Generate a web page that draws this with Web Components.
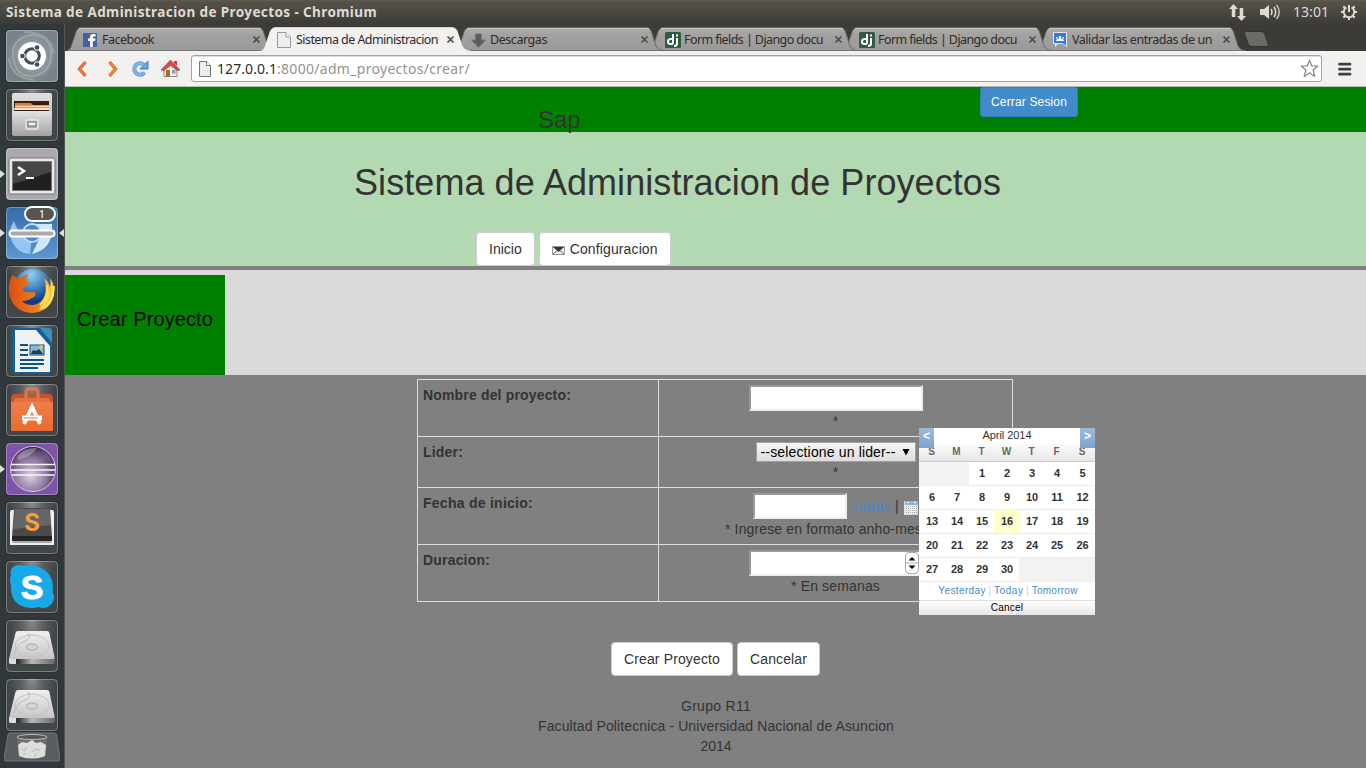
<!DOCTYPE html>
<html lang="es">
<head>
<meta charset="utf-8">
<title>Sistema de Administracion de Proyectos</title>
<style>
html,body{margin:0;padding:0;width:1366px;height:768px;overflow:hidden}
body{font-family:"Liberation Sans",Arial,sans-serif}
</style>
</head>
<body>
<ubuntu-desktop></ubuntu-desktop>
<script>
const define = (name, html, after) => customElements.define(name, class extends HTMLElement {
  connectedCallback() {
    if (this.shadowRoot) return;
    const root = this.attachShadow({mode: 'open'});
    root.innerHTML = typeof html === 'function' ? html(this) : html;
    if (after) after(this, root);
  }
});

/* Single line of text spread over a given width */
define('fit-text', '<style>:host{display:inline-block;white-space:pre}span{display:inline-block}</style><span><slot></slot></span>', (el, root) => {
  const s = root.querySelector('span'), w = s.getBoundingClientRect().width, n = el.textContent.length;
  if (w && el.getAttribute('w')) s.style.letterSpacing = ((+el.getAttribute('w') - w) / n) + 'px';
});

/* ---------- top panel ---------- */
define('top-panel', `
<style>
:host{display:flex;align-items:center;height:24px;box-sizing:border-box;background:linear-gradient(#5f5c4f 0,#54524a 2px,#3e3c37 23px);color:#dfdbd2;font-family:"Noto Sans","Open Sans",sans-serif;padding:0 8px 0 6px;line-height:24px}
.t{font-weight:700;font-size:13.500px;flex:1}
.r{display:flex;align-items:center;height:24px}
.clock{font-size:14px;margin:0 11px 0 12px}
svg{display:block}
</style>
<div class="t"><fit-text w="371">Sistema de Administracion de Proyectos - Chromium</fit-text></div>
<div class="r">
<svg width="19" height="18" viewBox="0 0 19 18" fill="#dfdbd2"><path d="M5.5 1 10 6H7.3v8H3.8V6H1zM13.5 18 9 13h2.7V5h3.5v8H18z"/></svg>
<svg style="margin-left:13px" width="21" height="18" viewBox="0 0 21 18" fill="none" stroke="#dfdbd2" stroke-width="1.5"><path d="M0 6h4l5-4v14l-5-4H0z" fill="#dfdbd2" stroke="none"/><path d="M11 6q2 3 0 6M14 4q3.5 5 0 10" /><path d="M16.5 2q5.5 7 0 14" opacity=".8"/></svg>
<fit-text class="clock" w="36">13:01</fit-text>
<svg width="18" height="18" viewBox="0 0 18 18" fill="none" stroke="#dfdbd2"><path d="M6.4 4.3A5.3 5.3 0 1 0 11.6 4.3M9 2v7" stroke-width="2"/><path d="M9 14v3M1 9h3M14 9h3M3.3 14.7l2-2M14.7 14.7l-2-2M3.3 3.3l2 2M14.7 3.3l-2 2" stroke-width="2"/></svg>
</div>`);

/* ---------- launcher ---------- */
const disk = `<defs><linearGradient id="d" y2="1" x2="0"><stop stop-color="#efefef"/><stop offset="1" stop-color="#c6c6c6"/></linearGradient><linearGradient id="e"><stop offset=".2" stop-color="#333"/><stop offset=".5" stop-color="#bbb"/><stop offset="1" stop-color="#666"/></linearGradient></defs><path d="M3 38h46v4q0 2-2 2H5q-2 0-2-2z" fill="url(#e)"/><path d="M3 38h7v6H5q-2 0-2-1z" fill="#ddd"/><path d="M12 11h29q2 0 2.400 2L48.500 37q.5 2-2 2H5q-2 0-1.500-2L9.500 13q.5-2 2.500-2z" fill="url(#d)"/><ellipse cx="26" cy="26" rx="17" ry="11" fill="none" stroke="#c2c2c2"/><ellipse cx="26" cy="27" rx="5.500" ry="3" fill="#d4d4d4" stroke="#aaa"/><path d="M22 13q4 5-3 8-8 2-11 13" fill="none" stroke="#bbb"/>`;
const icons = {
dash:`<defs><radialGradient id="a"><stop stop-color="#a9b1b5"/><stop offset="1" stop-color="#788389"/></radialGradient></defs><rect width="52" height="52" rx="4" fill="url(#a)"/><g fill="none" stroke="#b8c0c3" stroke-width="2" opacity=".45"><path d="M7 28Q5 8 26 5q20 0 19 22M45 20q2 22-17 26Q10 48 7 27M18 2q26 0 30 22M3 28q2 20 25 22"/></g><circle cx="26" cy="26" r="14" fill="#fff"/><circle cx="26" cy="26" r="7.300" fill="none" stroke="#414e54" stroke-width="3"/><g fill="#414e54" stroke="#fff"><circle cx="16.500" cy="26" r="2.800"/><circle cx="31" cy="17.500" r="2.800"/><circle cx="31" cy="34.500" r="2.800"/></g>`,
files:`<defs><linearGradient id="f" x2="0" y2="1"><stop stop-color="#e2e2e2"/><stop offset="1" stop-color="#a2a2a2"/></linearGradient></defs><path d="M6 6q0-2 2-2h36q2 0 2 2v40H6z" fill="url(#f)"/><path d="M8 12h35v10H8z" fill="#3a1e12"/><path d="M9 14h16l2 2h16v5H9z" fill="#e07b39"/><path d="M9 17.500h34" stroke="#ffd9a0" stroke-width="1.500"/><path d="M8 20h35" stroke="#fff" stroke-width="1.500"/><path d="M6 22h40l-1 25H7z" fill="url(#f)"/><rect x="20" y="31" width="12" height="9" rx="2" fill="#aaa" stroke="#ddd" stroke-width="2"/><rect x="22" y="33" width="8" height="4" fill="#eee" stroke="#777"/>`,
term:`<rect width="52" height="52" rx="4" fill="#aaa8aa"/><rect x="3" y="10" width="46" height="36" rx="2" fill="#e8e8e8" stroke="#777"/><rect x="6.500" y="13.500" width="39" height="29" fill="#202020" stroke="#777"/><path d="m7 14 38 0v10L7 36z" fill="#464646"/><path d="m12 19 6 4-6 4" stroke="#fff" stroke-width="2.500" fill="none"/><path d="M20 30h8" stroke="#fff" stroke-width="2"/>`,
chromium:`<defs><linearGradient id="g" x2="0" y2="1"><stop stop-color="#356ba8"/><stop offset="1" stop-color="#5c96d3"/></linearGradient></defs><rect width="52" height="52" rx="4" fill="url(#g)"/><path d="M8 14q4 15 18 15l-2 18A21 21 0 0 1 8 14z" fill="#98c4f2"/><path d="M26 17h20q2 25-20 30l9-19z" fill="#d1e8fb"/><circle cx="26" cy="26" r="9" fill="#4488d0" stroke="#c0dbf5" stroke-width="2"/><rect x="3.500" y="23.500" width="45" height="6" rx="3" fill="#aaa" stroke="#fff" stroke-width="2"/>`,
firefox:`<defs><radialGradient id="h" cx=".45" cy=".15" r=".7"><stop stop-color="#8ad3f5"/><stop offset="1" stop-color="#0c3c83"/></radialGradient><linearGradient id="i" x2="1" y2="0"><stop stop-color="#d94f12"/><stop offset=".65" stop-color="#f08021"/><stop offset="1" stop-color="#ffdc46"/></linearGradient></defs><circle cx="27" cy="22" r="19" fill="url(#h)"/><path d="M6 9q-5 12-2 22 5 15 22 16 18-1 22-18 1-10-4-17 1 6 0 9-2-6-6-9 3 10 1 16-3 10-12 11-8 0-11-4 7 0 13-5 2-4-3-4-6 1-9-2 0-3 6-6l-2-3q-2-3 2-7-6 1-9 5-5-2-8-4z" fill="url(#i)"/><path d="M48 20q-1 19-14 23 9-8 9-18M41 19q2 13-7 20" fill="none" stroke="#ffe05a" stroke-width="2"/>`,
writer:`<path d="M10 3h31q5 0 5 5v36q0 5-5 5H10q-4 0-4-5V8q0-5 4-5z" fill="#116097"/><path d="M34 3h10l2 2v13z" fill="#3b8fbd"/><path d="M9 5h21l14 16v26H9z" fill="#f1f1f1"/><path d="M14 21h8m-8 5h8m-8 5h8m-8 5h24m-24 4h24m-24 4h18" transform="translate(0 -1)" stroke="#0b548a" stroke-width="2"/><rect x="24" y="20" width="14" height="10" fill="#83bad7" stroke="#0b548a"/><path d="m25 29 2-4 3 1 3-2 4 5z" fill="#253d45"/><circle cx="35" cy="22" r="2" fill="#e4c744"/>`,
soft:`<defs><linearGradient id="j" x2="0" y2="1"><stop stop-color="#ee8050"/><stop offset="1" stop-color="#ec6a2d"/></linearGradient></defs><path d="M5 13h42v34H5z" fill="url(#j)"/><path d="M5 13v5h42v-5l-2-3H7z" fill="#bf5530"/><path d="M8 14h36v4H8z" fill="#e66d40"/><path d="M20 18V8q0-3 3-3h6q3 0 3 3v10" fill="none" stroke="#e1754b" stroke-width="3"/><path d="m18 40 8-17 8 17" fill="none" stroke="#fff" stroke-width="4"/><path d="M16 34h20" stroke="#fff" stroke-width="5"/><path d="M18 34h14" stroke="#e97a4b"/>`,
eclipse:`<defs><radialGradient id="k" cx=".45" cy=".65"><stop stop-color="#ddd2e4"/><stop offset=".7" stop-color="#8d7ba3"/><stop offset="1" stop-color="#5a446c"/></radialGradient><linearGradient id="kk" x2="0" y2="1"><stop stop-color="#2b1941"/><stop offset="1" stop-color="#cabdd5" stop-opacity="0"/></linearGradient></defs><rect width="52" height="52" rx="4" fill="#8053aa"/><circle cx="27" cy="26" r="22.500" fill="url(#k)" stroke="#d8cce2"/><path d="M8 20Q14 4 27 4t19 16z" fill="url(#kk)"/><path d="M5 21.500h44M5 27h44M6 32h42" stroke="#f8f6fa" stroke-width="1.700"/><path d="M11 14q7-10 20-9-3 7-18 12z" fill="#eee" opacity=".3"/>`,
sublime:`<path d="m4 10 1-2h42l1 2v33H4z" fill="#eee"/><path d="m6 41 3-4h34l3 4z" fill="#aaa"/><path d="m8 8q0-2 2-2h32q2 0 2 2l2 27H6z" fill="#4a4a4a"/><path d="M6 34h40v5H6z" fill="#252525"/><path d="M9 7h34l2 16-38 4z" fill="#666"/><text x="26" y="29" text-anchor="middle" font-family="Inter,sans-serif" font-size="24" font-weight="700" fill="#ff9c3a">S</text>`,
skype:`<path d="M5 14C3 7 10 2 18 5q9-2 17 2 11 5 12 18 0 3-.5 6 4 7-2 13-5 5-12 2-10 3-19-2Q4 38 5 25 3 19 5 14z" fill="#18a9e8"/><text x="26" y="38" text-anchor="middle" font-family="Liberation Sans,sans-serif" font-size="34" font-weight="700" fill="#fff" stroke="#fff">S</text>`,
disk, disk2:disk
};
const tile = (k) => `<launcher-tile icon="${k}"${/term|chromium|eclipse/.test(k)?' running':''}${k==='chromium'?' count="1"':''}></launcher-tile>`;
define('launcher-tile', el => `
<style>
:host{display:block;position:relative;width:52px;height:52px;box-sizing:border-box}
.box{width:52px;height:52px;border-radius:4px;background:radial-gradient(ellipse at 50% 0,#8a8d8e 0,#5b5f61 30%,#424749 60%,#404547);box-shadow:0 0 0 1px #1f252855}
svg{display:block}
.l,.r{position:absolute;top:22px;width:5px;height:8px;background:#ddd}
.l{left:-6px;clip-path:polygon(0 0,100% 50%,0 100%)}
.r{left:53px;clip-path:polygon(100% 0,0 50%,100% 100%)}
.n{position:absolute;left:18px;top:-1px;width:28px;height:12px;border:2px solid #fff;border-radius:8px;background:#555;color:#fff;font:11px/12px "Noto Sans",sans-serif;text-align:center;text-indent:4px}
</style><div class="box"><svg width="52" height="52" viewBox="0 0 52 52">${icons[el.getAttribute('icon')]}<rect x=".5" y=".5" width="51" height="51" rx="4" fill="none" stroke="#fff" opacity=".3"/></svg></div>
${el.hasAttribute('running')?'<i class="l"></i>':''}${el.hasAttribute('count')?`<i class="r"></i><span class="n">${el.getAttribute('count')}</span>`:''}`);
define('unity-launcher', `
<style>
:host{display:flex;flex-direction:column;gap:7px;width:65px;box-sizing:border-box;padding:6px 0 0 6px;background:linear-gradient(90deg,#30383b,#30383b 64px,#555 64px);height:744px;overflow:hidden}
launcher-tile{flex:none}
.trash{margin-top:-6px;margin-left:-2px;display:block;flex:none}
</style>${Object.keys(icons).map(tile).join('')}
<svg class="trash" width="56" height="31" viewBox="0 0 56 31"><path d="M6 1h44q2 0 2.500 2L56 27q0 2-2 2H2q-2 0-2-2L4 3q0-2 2-2z" fill="#585d60" stroke="#73787a"/><path d="M13 5q15-4 30 0l-2 20q-13 4-26 0z" fill="#6d6f70"/><ellipse cx="28" cy="5" rx="15" ry="2.500" fill="#555" stroke="#bbb"/><path d="m14 13 4-3 5 1 5-3 4 3 5-1 5 3-1 11q-13 5-26 0z" fill="#dcdedc"/><path d="m17 16 3 3 3-4m5 5 4-3 4 1M19 23l3-2m8 3 3-2" fill="none" stroke="#b5b8b6"/></svg>`);

/* ---------- browser chrome ---------- */
const fav = {
fb:`<rect y="1" width="14" height="14" fill="#4561a8"/><path d="M7 15V9H5V6.500h2V5q0-3 3-3h2.500v2.500H11q-1.200 0-1.200 1.200v.8h2.700L12 9H9.800v6z" fill="#fff"/>`,
page:`<path d="M.5.500h8.500l4.500 4.500v10.500H.5z" fill="#eee" stroke="#999"/><path d="M9 .5V5h4.500" fill="#fff" stroke="#999"/>`,
down:`<path d="M4.500 2h6v6h4l-7 7.500-7-7.500h4z" fill="#5b5b5b" stroke="#777"/>`,
dj:`<rect width="16" height="16" rx="1.500" fill="#2e5b41"/><path d="M8 2v10M8 7H5.500Q3 7 3 9.500T5.500 12H8M12 6v5.500Q12 14 9 14M12 2.500v2" fill="none" stroke="#fff" stroke-width="2"/>`,
grp:`<path d="M.5.500h13v14l-4-3h-9z" fill="#3579e8" stroke="#e8e8e0"/><path d="M2 12v3l3-3z" fill="#e8e8e0"/><path d="M3 9h8q0-2-2-2.300L7 6 5 6.700Q3 7 3 9z" fill="#fff"/><path d="M6 4h2v2H6zM3 5h1.500v1.500H3zM9.500 5H11v1.500H9.500z" fill="#fff"/>`
};
define('browser-tab', el => {
  const on = el.hasAttribute('active');
  return `
<style>
:host{display:block;position:relative;width:209px;height:24px;flex:none;margin-right:-15px}
.bg{position:absolute;inset:0;display:block}
.c{position:relative;display:flex;align-items:center;height:24px;padding-left:16px}
.c svg{flex:none;width:16px}
.tx{width:143px;margin-left:3px;white-space:nowrap;font:12.500px/26px "Noto Sans",sans-serif;height:24px;color:#2f2b28}
.x{margin-left:7px}
</style>
<svg class="bg" width="209" height="24" viewBox="0 0 209 24"><defs><linearGradient id="t" x2="0" y2="1"><stop stop-color="#b0aeac"/><stop offset=".3" stop-color="#a4a2a0"/><stop offset="1" stop-color="#9b9997"/></linearGradient></defs>
<path d="M0 24Q3 23 4 20L9 5Q10.500 .5 15 .5H191Q195 .5 196.500 5L201 19Q203 23.500 209 24z" fill="${on?'#f2f1f0':'url(#t)'}"/><path d="M0 24Q3 23 4 20L9 5Q10.500 .5 15 .5H191Q195 .5 196.500 5L201 19Q203 23.500 209 24" fill="none" stroke="${on?'#fff':'#6b6965'}" stroke-width="${on?.6:1}"/>${on?'':'<path d="M12 1.500H194" stroke="#c4c2c0"/><path d="M3 23.500h203" stroke="#777"/>'}</svg>
<div class="c"><svg width="16" height="16" style="margin-top:2px">${fav[el.getAttribute('icon')]}</svg><div class="tx"><fit-text w="${el.getAttribute('w')}">${el.getAttribute('label')}</fit-text></div>
<svg class="x" width="9" height="9" viewBox="0 0 9 9" style="width:9px;margin-top:1px"><path d="m1.500 1.500 6 6m0-6-6 6" stroke="#4b4845" stroke-width="1.600"/></svg></div>`;
});
define('tab-strip', `
<style>
:host{display:flex;height:27px;box-sizing:border-box;padding:3px 0 0 2px;background:#3c3b37;align-items:flex-start}
.new{margin-left:12px;margin-top:4px;display:block}
</style>
<browser-tab style="z-index:6" icon="fb" label="Facebook" w="52"></browser-tab>
<browser-tab style="z-index:9" active icon="page" label="Sistema de Administracion" w="142"></browser-tab>
<browser-tab style="z-index:5" icon="down" label="Descargas" w="57"></browser-tab>
<browser-tab style="z-index:4" icon="dj" label="Form fields | Django docu" w="139"></browser-tab>
<browser-tab style="z-index:3" icon="dj" label="Form fields | Django docu" w="139"></browser-tab>
<browser-tab style="z-index:2" icon="grp" label="Validar las entradas de un" w="140"></browser-tab>
<svg class="new" width="26" height="17" viewBox="0 0 26 17"><path d="M3 .5h15q3 0 4 3l3 9q1 3-2 3H9q-3 0-4-3L1.500 3Q.500.500 3 .5z" fill="#6c6a65" stroke="#33322e"/></svg>`);
define('browser-toolbar', `
<style>
:host{display:flex;align-items:center;height:36px;box-sizing:border-box;background:#f2f1f0;border-bottom:1px solid #bbb9b6;padding:0 14px 0 12px}
svg{display:block;flex:none}
.url{display:flex;align-items:center;width:1131px;height:27px;box-sizing:border-box;border:1px solid #a5a29d;border-radius:3px;background:#fff;margin:0 16px 0 11px;padding:0 2px 0 7px;font:14px/24px "Noto Sans",sans-serif;color:#2c2a28;box-shadow:inset 0 1px #ddd}
.url fit-text+fit-text{color:#96928d}
.sp{flex:1}
.i1{margin-right:19px}.i2{margin-right:14px}.i3{margin-right:12px}
</style>
<svg class="i1" width="11" height="18" viewBox="0 0 11 18"><path d="M8.500 2 2.500 9l6 7" fill="none" stroke="#d0562b" stroke-width="3.200"/><path d="M8.500 2 2.500 9l6 7" fill="none" stroke="#f0763d" stroke-width="2"/></svg>
<svg class="i2" width="11" height="18" viewBox="0 0 11 18"><path d="m2.500 2 6 7-6 7" fill="none" stroke="#d0562b" stroke-width="3.200"/><path d="m2.500 2 6 7-6 7" fill="none" stroke="#f0863d" stroke-width="2"/></svg>
<svg class="i3" width="17" height="18" viewBox="0 0 17 18"><path d="M12.500 12.500A5.700 5.700 0 1 1 12 5" fill="none" stroke="#5790cc" stroke-width="4"/><path d="M16 1v8H8z" fill="#6ea5df" stroke="#4380c0"/><path d="M12.500 12.500A5.700 5.700 0 1 1 12 5" fill="none" stroke="#80b3e8" stroke-width="2.600"/></svg>
<svg width="19" height="19" viewBox="0 0 19 19"><path d="M3 9v8.500h13V9L9.500 3z" fill="#f4efdf" stroke="#888"/><rect x="5" y="11" width="4" height="6.500" fill="#a46b28"/><rect x="11" y="11" width="3.500" height="3.500" fill="#72a0cf"/><path d="M0 11 9.500 1l9.500 10-3 .5-6.500-5-6.500 5z" fill="#cf4a50" stroke="#a8343a" stroke-width=".6"/><path d="M13 2h3v5l-3-3z" fill="#c73a40"/></svg>
<div class="url"><svg width="12" height="16" viewBox="0 0 12 16" style="margin-right:6px"><path d="M.5.500h7l4 4v11H.5z" fill="#eee" stroke="#777"/><path d="M7.500.500v4h4" fill="#fff" stroke="#777"/></svg><fit-text w="60">127.0.0.1</fit-text><fit-text w="193">:8000/adm_proyectos/crear/</fit-text><span class="sp"></span><svg width="19" height="19" viewBox="0 0 19 19"><path d="M9.500 1.200 11.800 7h6l-4.700 4 1.700 6.500-5.300-3.700-5.300 3.700L5.900 11 1.200 7h6z" fill="#fff" stroke="#858585" stroke-width="1.200" stroke-linejoin="round"/></svg></div>
<svg width="14" height="14" viewBox="0 0 14 14"><path d="M1.500 2.200h10.500M1.500 7.200h10.500M1.500 12.200h10.500" stroke="#403f3d" stroke-width="2.800" stroke-linecap="round"/></svg>`);

/* ---------- web page ---------- */
define('bs-button', `
<style>
:host{display:inline-flex;align-items:center;box-sizing:border-box;height:34px;padding:0 12px;border:1px solid #ccc;border-radius:4px;background:#fff;color:#333;font-size:14px;white-space:nowrap}
:host([primary]){height:30px;padding:0 10px;font-size:12px;border-color:#357ebd;background:#428bca;color:#fff;border-radius:3px}
svg{display:block}
</style><slot></slot>`);
define('site-header', `
<style>
:host{display:block;color:#333}
.top{height:45px;background:#008000;display:grid;grid-template-columns:473px 442px auto;justify-items:start}
.sap{font-size:24px;line-height:26px;margin-top:20px;grid-column:2}
.hero{height:134px;background:#b3d9b3;display:flex;flex-direction:column;box-sizing:border-box;padding-top:31px}
h1{font-size:36px;line-height:40px;margin:0 0 0 289px;font-weight:400}
nav{display:flex;gap:4px;margin:29px 0 0 411px}
.band{border-top:4px solid #808080;background:#d9d9d9;padding-top:5px;box-sizing:content-box;height:100px}
.box{width:160px;height:100px;box-sizing:border-box;padding-top:33px;background:#008000;color:#000;font-size:20px;line-height:22px;text-align:center}
</style>
<div class="top"><div class="sap">Sap</div><bs-button primary><fit-text w="76">Cerrar Sesion</fit-text></bs-button></div>
<div class="hero"><h1><fit-text w="647">Sistema de Administracion de Proyectos</fit-text></h1>
<nav><bs-button>Inicio</bs-button><bs-button><svg width="13" height="9" viewBox="0 0 13 9" style="margin:3px 5px 0 0"><rect x=".5" y=".5" width="12" height="8" fill="#eee" stroke="#999"/><path d="M1 1h11L6.500 6z" fill="#333"/><path d="m1 8 4-3m7 3L8 5" stroke="#777"/></svg><fit-text w="88">Configuracion</fit-text></bs-button></nav></div>
<div class="band"><div class="box"><fit-text w="136">Crear Proyecto</fit-text></div></div>`);
define('date-picker', () => {
  let d = '';
  for (let i = 0; i < 35; i++) { const n = i - 1; d += n < 1 || n > 30 ? '<i class="e"></i>' : `<i${n === 16 ? ' class="now"' : ''}>${n}</i>`; }
  return `
<style>
:host{display:block;width:176px;height:187px;background:#fff;font-size:11px;color:#333;text-align:center;overflow:hidden}
.cap{height:15px;line-height:15px}
.g{display:grid;grid-template-columns:25px 25px 25px 25px 25px 25px 26px}
.g i{font-style:normal;font-weight:700;height:23px;line-height:23px;border-bottom:1px solid #ececec;padding-left:1px}
.g i.e{background:#f2f2f2}.g i.now{background:#ffc}
.h b{height:18px;line-height:17px;font-size:10px;color:#666;background:linear-gradient(#fdfdfd,#e6e6e6);border-bottom:1px solid #ccc}
.links{height:18px;line-height:17px;font-size:10px;color:#ccc;border-bottom:1px solid #ddd;padding-left:2px}
.links fit-text{color:#428bca}
.cancel{height:14px;line-height:13px;font-size:10px;color:#000;background:linear-gradient(#fff,#e6e6e6);letter-spacing:.2px}
.p,.n{position:absolute;top:0;width:15px;height:20px;line-height:17px;background:linear-gradient(#9dbbdc,#7ca3cd);color:#fff;font-weight:700;font-size:12px}
.p{left:0}.n{right:0}
</style>
<div class="cap"><fit-text w="49">April 2014</fit-text></div><div class="g h"><b>S</b><b>M</b><b>T</b><b>W</b><b>T</b><b>F</b><b>S</b></div><div class="g">${d}</div>
<div class="links"><fit-text w="47.500">Yesterday</fit-text> | <fit-text w="29.500">Today</fit-text> | <fit-text w="46">Tomorrow</fit-text></div><div class="cancel">Cancel</div>
<span class="p">&lt;</span><span class="n">&gt;</span>`;
});
define('project-form', `
<style>
:host{display:block;position:relative;width:596px;margin:4px 0 0 352px;color:#333;font-size:14px;line-height:20px}
.t{display:grid;grid-template-columns:240px 353px;column-gap:1px;row-gap:1px;background:#ddd;padding:1px}
.t>div{background:#808080;padding:5px;text-align:center}
.t>.l{font-weight:700;text-align:left}
.row{display:flex;justify-content:center;align-items:center}
.in{box-sizing:border-box;width:174px;height:26px;background:#fff;border:2px solid;border-color:#9a9a9a #eee #eee #9a9a9a}
.sel{display:flex;align-items:center;box-sizing:border-box;width:160px;height:20px;border:1px solid #a0a0a0;background:linear-gradient(#f6f6f6,#ddd);color:#000;padding:0 5px 0 4px;justify-content:space-between;white-space:nowrap}
.num{width:174px;padding-right:0}
.spin{width:14px;height:22px;box-sizing:border-box;border:1px solid #aaa;border-radius:4px;display:block;background:#fff;margin:0 2px 0 auto}
date-picker{position:absolute;left:502px;top:49px}
.t>div>.note{white-space:nowrap;text-align:left;padding-left:61px}
.date{height:26px;justify-content:flex-start;padding-left:89px}
.date .in{width:94px;margin-right:4px}.date a{color:#428bca}
</style>
<div class="t">
<div class="l"><fit-text w="148">Nombre del proyecto:</fit-text></div><div><div class="row"><div class="in"></div></div>*</div>
<div class="l"><fit-text w="40">Lider:</fit-text></div><div><div class="row"><div class="sel"><fit-text w="135">--selectione un lider--</fit-text><svg width="8" height="8"><path d="M.5 1h7L4 7.500z"/></svg></div></div>*</div>
<div class="l"><fit-text w="110">Fecha de inicio:</fit-text></div><div><div class="row date"><div class="in"></div><a><fit-text w="40">Today</fit-text></a><span style="margin-left:4px">|</span><svg width="15" height="16" viewBox="0 0 15 16" style="margin:3px 0 0 5px"><rect x=".5" y="1.500" width="13" height="13" fill="#eee" stroke="#ddd"/><path d="M1 1h13v4H1z" fill="#8fb1d8"/><path d="M2 6.500h11M2 8.500h11M2 10.500h11M2 12.500h11" stroke="#aaa" stroke-dasharray="1 1"/><path d="M3 2.500h2m5 0h2" stroke="#fff"/></svg></div><div class="note"><fit-text w="197">* Ingrese en formato anho-mes</fit-text></div></div>
<div class="l"><fit-text w="67">Duracion:</fit-text></div><div><div class="row"><div class="in num"><svg class="spin" viewBox="0 0 12 20"><path d="M0 10h12" stroke="#aaa"/><path d="M2.500 7.500h7L6 4zM2.500 12.500h7L6 16z"/></svg></div></div><fit-text w="89">* En semanas</fit-text></div>
</div>
<date-picker></date-picker>`);
define('web-page', `
<style>
:host{display:block;height:681px;background:#808080;overflow:hidden}
.act{display:flex;justify-content:center;gap:4px;margin-top:40px}
footer{margin-top:20px;padding-left:1px;text-align:center;color:#333;font-size:14px;line-height:20px}
</style>
<site-header></site-header><project-form></project-form>
<div class="act"><bs-button><fit-text w="96">Crear Proyecto</fit-text></bs-button><bs-button><fit-text w="57">Cancelar</fit-text></bs-button></div>
<footer><fit-text w="70">Grupo R11</fit-text><br><fit-text w="356">Facultad Politecnica - Universidad Nacional de Asuncion</fit-text><br>2014</footer>`);
define('ubuntu-desktop', `
<style>
:host{display:block;width:1366px;height:768px;overflow:hidden}
.m{display:grid;grid-template-columns:65px 1301px}
</style>
<top-panel></top-panel><div class="m"><unity-launcher></unity-launcher><main><tab-strip></tab-strip><browser-toolbar></browser-toolbar><web-page></web-page></main></div>`);
</script>
</body>
</html>
